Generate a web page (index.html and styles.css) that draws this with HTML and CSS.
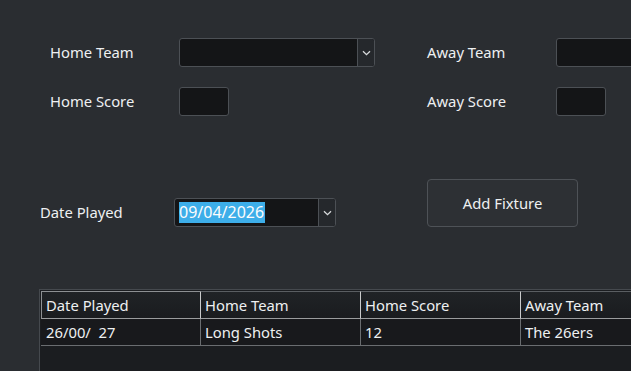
FILE: index.html
```html
<!DOCTYPE html>
<html>
<head>
<meta charset="utf-8">
<link rel="stylesheet" href="styles.css">
</head>
<body>
<div class="page">
  <div class="grid">
    <div class="label">Home Team</div>
    <div class="cell"><div class="combo home-combo"><div class="combo-field"></div><div class="combo-btn"><svg width="9" height="6" viewBox="0 0 9 6"><path d="M1 1.2 L4.5 4.6 L8 1.2" fill="none" stroke="#d8dadc" stroke-width="1.3"/></svg></div></div></div>
    <div class="label">Away Team</div>
    <div class="cell"><div class="combo away-combo"><div class="combo-field"></div></div></div>

    <div class="label">Home Score</div>
    <div class="cell"><div class="spin"></div></div>
    <div class="label">Away Score</div>
    <div class="cell"><div class="spin"></div></div>
  </div>

  <div class="date-row">
    <div class="date-left">
      <div class="label date-label">Date Played</div>
      <div class="combo date-combo"><div class="combo-field date-field"><span class="sel">09/04/2026</span></div><div class="combo-btn"><svg width="9" height="6" viewBox="0 0 9 6"><path d="M1 1.2 L4.5 4.6 L8 1.2" fill="none" stroke="#d8dadc" stroke-width="1.3"/></svg></div></div>
    </div>
    <button class="add-btn">Add Fixture</button>
  </div>

  <div class="table-wrap">
    <div class="table">
      <div class="tr head">
        <div class="th first">Date Played</div>
        <div class="th">Home Team</div>
        <div class="th">Home Score</div>
        <div class="th">Away Team</div>
      </div>
      <div class="tr row">
        <div class="td first">26/00/  27</div>
        <div class="td">Long Shots</div>
        <div class="td">12</div>
        <div class="td">The 26ers</div>
      </div>
    </div>
  </div>
</div>
</body>
</html>
```

FILE: styles.css
```css
html, body {
  margin: 0;
  padding: 0;
  overflow: hidden;
  width: 631px;
  height: 371px;
  background: #2a2d31;
}
.page {
  font-family: "Noto Sans", "DejaVu Sans", sans-serif;
  font-size: 14.8px;
  color: #eef0f1;
  width: 631px;
  height: 371px;
  overflow: hidden;
  padding-top: 38px;
  box-sizing: border-box;
}
.grid {
  display: grid;
  grid-template-columns: 129px 248px 129px 200px;
  grid-auto-rows: 29px;
  row-gap: 20px;
  padding-left: 50px;
}
.label {
  display: flex;
  align-items: center;
  line-height: 1;
  white-space: nowrap;
}
.cell {
  display: flex;
  align-items: stretch;
}
.combo {
  display: flex;
  box-sizing: border-box;
  height: 29px;
  border: 1px solid #4c5055;
  border-radius: 3px;
  background: #141517;
}
.home-combo { width: 196px; }
.away-combo { width: 120px; }
.combo-field {
  flex: 1;
}
.combo-btn {
  width: 16px;
  border-left: 1px solid #4c5055;
  background: #25282c;
  display: flex;
  align-items: center;
  justify-content: center;
  border-radius: 0 2px 2px 0;
}
.spin {
  box-sizing: border-box;
  width: 50px;
  height: 29px;
  border: 1px solid #4c5055;
  border-radius: 3px;
  background: #141517;
}
.date-row {
  display: flex;
  align-items: flex-start;
  margin-top: 63px;
  padding-left: 40px;
}
.date-left {
  display: flex;
  align-items: center;
  margin-top: 19px;
  height: 29px;
}
.date-label {
  width: 134px;
  height: 29px;
}
.date-combo {
  width: 162px;
}
.date-field {
  display: flex;
  align-items: center;
  padding-left: 4px;
}
.sel {
  background: #3daee9;
  color: #fcfcfc;
  font-size: 16px;
  line-height: 21px;
  height: 21px;
  padding-right: 1px;
}
.add-btn {
  margin-left: 91px;
  width: 151px;
  height: 48px;
  box-sizing: border-box;
  background: #2d3034;
  border: 1px solid #4e5257;
  border-radius: 4px;
  color: #eef0f1;
  font-family: "Noto Sans", "DejaVu Sans", sans-serif;
  font-size: 14.8px;
  padding: 0;
}
.table-wrap {
  margin-top: 62px;
  margin-left: 39px;
  width: 640px;
  height: 100px;
  box-sizing: border-box;
  border-top: 1px solid #45494e;
  border-left: 1px solid #45494e;
  background: #1b1d20;
  padding: 1px 0 0 1px;
}
.tr {
  display: grid;
  grid-template-columns: 159px 160px 160px 160px;
}
.th {
  height: 28px;
  box-sizing: border-box;
  display: flex;
  align-items: center;
  padding-left: 4px;
  background: linear-gradient(#202326, #1a1c1f);
  border-left: 1px solid #c9cacb;
  border-top: 1px solid #5a5e62;
  border-bottom: 1px solid #9a9c9e;
  white-space: nowrap;
}
.th.first {
  border-left: 1px solid #8d9093;
  border-top: 1px solid #8d9093;
}
.td {
  height: 27px;
  box-sizing: border-box;
  display: flex;
  align-items: center;
  padding-left: 4px;
  background: #18191c;
  border-left: 1px solid #6a6d70;
  border-bottom: 1px solid #6a6d70;
  white-space: pre;
}
.td.first {
  border-left: none;
  padding-left: 5px;
}
```
